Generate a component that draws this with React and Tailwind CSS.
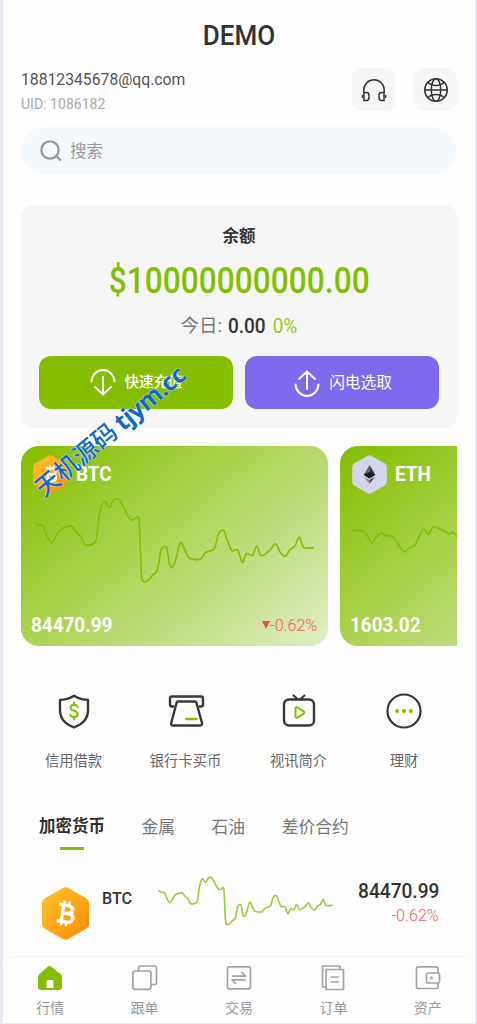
import React from "react";
import clsx from "clsx";

const BTC_POINTS = [
  [103, 275], [112, 282], [130, 287], [144, 322], [158, 337], [173, 308], [190, 293], [215, 287], [228, 303],
  [243, 318], [256, 343], [275, 343], [289, 330], [298, 262], [307, 223], [316, 213], [330, 232], [342, 208],
  [359, 208], [375, 238], [388, 263], [400, 269], [417, 263], [422, 355], [427, 446], [444, 451], [460, 433],
  [473, 420], [485, 357], [501, 351], [508, 395], [515, 412], [527, 392], [542, 337], [555, 358], [569, 383],
  [602, 387], [617, 367], [644, 355], [656, 312], [672, 300], [685, 335], [697, 361], [714, 359], [728, 397],
  [740, 370], [758, 375], [771, 347], [784, 376], [810, 360], [828, 340], [841, 365], [857, 378], [871, 358],
  [886, 347], [899, 320], [912, 352], [942, 352],
];

const ETH_POINTS = [
  [350, 301], [378, 301], [390, 312], [407, 337], [420, 320], [435, 308], [447, 316], [465, 318], [480, 332],
  [493, 353], [505, 365], [520, 352], [535, 345], [550, 315], [563, 296], [577, 312], [590, 290], [605, 294],
  [625, 302], [637, 311], [652, 307], [664, 322],
];

const smooth = (pts) =>
  pts.slice(1).reduce((d, [x, y], i) => {
    const [x0, y0] = pts[Math.max(i - 1, 0)];
    const [x1, y1] = pts[i];
    const [x3, y3] = pts[Math.min(i + 2, pts.length - 1)];
    return `${d} C ${x1 + (x - x0) / 7} ${y1 + (y - y0) / 7} ${x - (x3 - x1) / 7} ${y - (y3 - y1) / 7} ${x} ${y}`;
  }, `M ${pts[0][0]} ${pts[0][1]}`);

function Sparkline({ points, viewBox, className }) {
  return (
    <svg viewBox={viewBox} preserveAspectRatio="none" fill="none" className={className}>
      <path d={smooth(points)} stroke="currentColor" strokeWidth="1.6" strokeLinejoin="round" strokeLinecap="round" vectorEffect="non-scaling-stroke" />
    </svg>
  );
}

function BtcIcon({ className }) {
  return (
    <svg viewBox="0 0 47 53" className={className}>
      <defs>
        <linearGradient id="btc" x1="0" y1="0" x2="1" y2="1">
          <stop offset="0" stopColor="#ffc22e" />
          <stop offset=".55" stopColor="#ffa417" />
          <stop offset="1" stopColor="#ff8a00" />
        </linearGradient>
      </defs>
      <path d="M20.5 1.2q3-1.7 6 0L44 11.2q3 1.7 3 5v20.5q0 3.3-3 5l-17.5 10q-3 1.7-6 0L3 41.7q-3-1.7-3-5V16.2q0-3.3 3-5z" fill="url(#btc)" />
      <g transform="rotate(9 23.5 26.5)" fill="none" stroke="#fff" strokeWidth="3.4">
        <path d="M16 18.2h9q5 .3 5 4t-5 4h-4.5H26q5.5.4 5.5 4.4T26 35H16M20.5 18v17" />
        <path d="M20.8 14v4M25.8 14v4M20.8 35v4M25.8 35v4" strokeWidth="2.4" />
      </g>
    </svg>
  );
}

function EthIcon({ className }) {
  return (
    <svg viewBox="0 0 47 53" className={className}>
      <path d="M20.5 1.2q3-1.7 6 0L44 11.2q3 1.7 3 5v20.5q0 3.3-3 5l-17.5 10q-3 1.7-6 0L3 41.7q-3-1.7-3-5V16.2q0-3.3 3-5z" fill="#d3d5ea" />
      <path d="M23.5 13.5 15.5 27l8 5z" fill="#666" />
      <path d="m23.5 13.5 8 13.5-8 5z" fill="#333" />
      <path d="m15.5 27 8-4 8 4-8 5z" fill="#1c1c1c" />
      <path d="m16 29.5 7.5 9.500v-5z" fill="#888" />
      <path d="m31 29.5-7.500 9.500v-5z" fill="#444" />
    </svg>
  );
}

const services = [
  {
    label: "信用借款",
    width: "w-[105px]",
    icon: (
      <>
        <path d="M22 5.700c4.500 2.800 9.500 4.200 14 4.200V20c0 9-6 14.500-14 17.300C14 34.500 8 29 8 20v-10.100c4.500 0 9.500-1.400 14-4.200z" />
        <path d="M25.500 17c-.6-1.500-2-2.300-3.500-2.300-2 0-3.400 1.100-3.400 2.900 0 4.300 7.100 2 7.100 6.300 0 2-1.500 3.200-3.600 3.200-2 0-3.300-.9-3.900-2.500M22 12.300v2.400M22 27.100v2.400" stroke="#85bd00" strokeWidth="2" />
      </>
    ),
  },
  {
    label: "银行卡买币",
    width: "w-[119px]",
    icon: (
      <>
        <path d="M9.500 16.500H8q-2 0-2-2v-6q0-2 2-2h29q2 0 2 2v6q0 2-2 2h-1.500" />
        <path d="M14 11.500h17q1 0 1.300 1L38 33q.5 2.500-1.800 2.500H9q-2.400 0-1.800-2.500l5.500-20.500q.4-1 1.300-1z" />
        <path d="M22.500 29h10" stroke="#85bd00" />
      </>
    ),
  },
  {
    label: "视讯简介",
    width: "w-[107px]",
    icon: (
      <>
        <rect x="7" y="9.500" width="30" height="26" rx="5" />
        <path d="m16.500 5.500 4 3.500M27.500 5.500l-4 3.500" strokeWidth="2" />
        <path d="M18.500 18.500v8q.2 1.800 2 1.200l6-3.800q1.500-1.300 0-2.600l-6-3.800q-1.800-.8-2 1z" stroke="#85bd00" strokeWidth="2" />
      </>
    ),
  },
  {
    label: "理财",
    width: "w-[104px]",
    icon: (
      <>
        <circle cx="22" cy="21" r="16.500" strokeWidth="2.200" />
        <g fill="#85bd00" stroke="none">
          <circle cx="15.200" cy="21" r="2" />
          <circle cx="22" cy="21" r="2" />
          <circle cx="28.800" cy="21" r="2" />
        </g>
      </>
    ),
  },
];

const navItems = [
  {
    label: "行情",
    icon: (
      <path fillRule="evenodd" d="M11.400 1.300q1.100-.9 2.200 0l10.400 8.200q1 .8 1 2V22q0 3-3 3H4q-3 0-3-3V11.500q0-1.200 1-2zM9.500 23h7v-6.500q0-1.500-1.500-1.500h-4q-1.500 0-1.500 1.500z" fill="#85bd00" stroke="none" />
    ),
  },
  {
    label: "跟单",
    icon: (
      <>
        <rect x=".9" y="6" width="18" height="18.300" rx="2" />
        <path d="M6.500 6V3q0-2 2-2H22.500q2 0 2 2v14.500q0 2-2 2h-3.500" />
      </>
    ),
  },
  {
    label: "交易",
    icon: (
      <>
        <rect x="1.500" y="1.800" width="23" height="22" rx="2" />
        <path d="M6 11.200h13.500L15.500 7M19.500 14.800H6l4 4.200" />
      </>
    ),
  },
  {
    label: "订单",
    icon: (
      <>
        <path d="M5.500 22H2.500V1h17.500v3.500" />
        <rect x="6" y="4.500" width="17.500" height="20" />
        <path d="M10.500 12h8.500M10.500 17h8.500" />
      </>
    ),
  },
  {
    label: "资产",
    icon: (
      <>
        <path d="M23 8V3.800q0-2-2-2H3.500q-2 0-2 2V21.500q0 2 2 2H21q2 0 2-2V18" />
        <rect x="11.500" y="8" width="13" height="10" rx="1.500" />
        <circle cx="16.500" cy="13" r=".6" />
      </>
    ),
  },
];

const tabs = ["加密货币", "金属", "石油", "差价合约"];

function Header() {
  return (
    <header className="flex h-[127px] flex-col">
      <h1 className="flex h-[68px] items-center justify-center pt-[3px] text-[28px] font-medium">
        <span className="scale-x-[0.93]">DEMO</span>
      </h1>
      <div className="flex justify-between">
        <div className="whitespace-nowrap">
          <p className="-mt-px origin-left scale-x-[0.925] text-[17px] leading-6 text-[#555]">18812345678@qq.com</p>
          <p className="mt-[4px] origin-left scale-x-[0.97] text-[14.5px] leading-5 text-[#aaa]">UID: 1086182</p>
        </div>
        <div className="flex gap-[19px]">
          <button className="flex size-[43px] items-center justify-center rounded-[10px] bg-[#f6f6f6]">
            <svg viewBox="0 0 26 26" fill="none" stroke="#333" strokeWidth="1.500" className="size-[26px]">
              <path d="M2.800 16V13a10.200 10.200 0 0 1 20.400 0v3" />
              <path d="M3 15.500h2.300q2.700 0 2.700 2.500v2.500Q8 23.500 5.300 23.500H3zM23 15.500h-2.300q-2.700 0-2.700 2.500v2.500q0 3 2.700 3H23z" />
              <path d="M1.500 18v3M24.500 18v3" />
            </svg>
          </button>
          <button className="flex size-[43px] items-center justify-center rounded-[10px] bg-[#f6f6f6]">
            <svg viewBox="0 0 26 26" fill="none" stroke="#333" strokeWidth="1.500" className="size-[26px]">
              <circle cx="13" cy="13" r="11.300" />
              <ellipse cx="13" cy="13" rx="4.700" ry="11.300" />
              <path d="M1.700 13h22.600M4.800 5.300Q8 8.500 13 8.500t8.200-3.200M4.800 20.700Q8 17.500 13 17.500t8.200 3.200" />
            </svg>
          </button>
        </div>
      </div>
    </header>
  );
}

function BalanceCard() {
  return (
    <section className="mt-[31px] flex h-[223px] flex-col items-center rounded-xl bg-[#f6f6f6] px-[18px]">
      <p className="mt-5 text-[16.5px] leading-6 font-bold">余额</p>
      <p className="mt-[9px] scale-x-[0.88] text-[36px] leading-[46px] font-medium whitespace-nowrap text-[#85bd00]">$10000000000.00</p>
      <div className="mt-[10px] flex items-center justify-center text-xl leading-6 whitespace-nowrap">
        <span className="text-[18.5px] text-[#777]">今日:</span>
        <span className="ml-[5px] scale-x-[0.95] font-medium">0.00</span>
        <span className="ml-[5px] scale-x-[0.95] text-[#85bd00]/85">0%</span>
      </div>
      <div className="mt-[18px] flex w-full gap-3 text-white">
        <button className="flex h-[53px] w-[194px] items-center justify-center gap-[9px] rounded-xl bg-[#85bd00] text-[14.5px] font-medium">
          <svg viewBox="0 0 26 28" fill="none" stroke="currentColor" strokeWidth="2" className="h-7 w-[26px]" strokeLinecap="round">
            <path d="M1.600 12.500a11.400 11.400 0 0 1 22.800 0M13 8v17.500M5 18l8 7.500 8-7.500" />
          </svg>
          快速充值
        </button>
        <button className="flex h-[53px] w-[194px] items-center justify-center gap-[9px] rounded-xl bg-[#7d69ec] pl-[2px] text-[15.7px]">
          <svg viewBox="0 0 26 28" fill="none" stroke="currentColor" strokeWidth="2" className="h-7 w-[26px]" strokeLinecap="round">
            <path d="M1.600 15.500a11.400 11.400 0 0 0 22.800 0M13 20V2.500M5 10l8-7.500 8 7.500" />
          </svg>
          闪电选取
        </button>
      </div>
    </section>
  );
}

function CoinCard({ name, price, change, icon, chart }) {
  return (
    <div className="flex h-[200px] w-[307px] shrink-0 flex-col rounded-[18px] bg-[linear-gradient(139deg,#85bd00_0%,#a4cf40_35%,#bfdc7d_65%,#e0eec3_100%)] px-[10px]">
      <div className="mt-[9px] flex items-center gap-[8px] pl-[2px]">
        {icon}
        <span className="origin-left scale-x-[0.9] pt-px text-[21px] font-bold text-white">{name}</span>
      </div>
      <div className="-mt-[2px] h-[94px] pl-[3px] text-[#85bd00]">{chart}</div>
      <div className="mt-[24px] flex h-8 items-center justify-between">
        <span className="origin-left scale-x-[0.9] text-[21px] font-bold text-white">{price}</span>
        {change && (
          <span className="flex items-center text-[#ef5b63]">
            <i className="mb-[2px] size-0 border-x-4 border-t-8 border-x-transparent border-t-[#f5455c]" />
            <span className="-mr-[2px] origin-left scale-x-[0.95] text-[17px] font-light">{change}</span>
          </span>
        )}
      </div>
    </div>
  );
}

export default function App() {
  return (
    <div className="relative flex h-[1024px] w-[477px] flex-col overflow-hidden border-r-2 border-b border-l-[3px] border-[#e8e9f1] bg-[#fdfdfd] font-[Roboto,'Noto_Sans_CJK_SC',sans-serif] text-[#333]">
      <main className="flex flex-col pr-[18px] pl-[18px]">
        <Header />
        <div className="flex h-[47px] items-center gap-[8px] rounded-full bg-[#f3f9fc] pl-[19px] text-[#999]">
          <svg viewBox="0 0 22 22" fill="none" stroke="#999" strokeWidth="2.200" className="size-[22px]">
            <circle cx="10" cy="10" r="8.700" />
            <path d="m16 16 5 4.500" />
          </svg>
          <span className="pt-[3px] text-[16.5px]">搜索</span>
        </div>
        <BalanceCard />

        <section className="mt-[18px] flex gap-3 overflow-hidden">
          <CoinCard
            name="BTC"
            price="84470.99"
            change="-0.62%"
            icon={<BtcIcon className="h-[39px] w-[35px]" />}
            chart={<Sparkline points={BTC_POINTS} viewBox="103 185 840 282" className="h-[94px] w-[280px]" />}
          />
          <CoinCard
            name="ETH"
            price="1603.02"
            icon={<EthIcon className="h-[39px] w-[35px]" />}
            chart={<Sparkline points={ETH_POINTS} viewBox="350 185 840 282" className="h-[94px] w-[280px]" />}
          />
        </section>

        <section className="mt-[44px] flex">
          {services.map((item) => (
            <div key={item.label} className={clsx("flex flex-col items-center", item.width)}>
              <svg viewBox="0 0 44 44" fill="none" stroke="#383838" strokeWidth="2.400" strokeLinecap="round" strokeLinejoin="round" className="size-11">
                {item.icon}
              </svg>
              <span className="mt-[15px] text-[14.3px] leading-6 text-[#666]">{item.label}</span>
            </div>
          ))}
        </section>

        <nav className="mt-[42px] flex h-[36px] gap-[36.5px] pl-[18px] text-[16.8px] leading-6 text-[#777]">
          {tabs.map((tab, i) => (
            <div key={tab} className={clsx("flex flex-col items-center", i === 0 && "text-[16.5px] font-bold text-[#333]")}>
              {tab}
              {i === 0 && <span className="mt-[8px] h-[2.5px] w-6 bg-[#85bd00]" />}
            </div>
          ))}
        </nav>

        <div className="mt-[27px] flex h-[76px] items-start pr-[18px] pl-[21px]">
          <BtcIcon className="mt-[9px] h-[53px] w-[47px]" />
          <span className="mt-[8px] ml-[13px] w-[57px] origin-left scale-x-[0.95] text-[17px] leading-6 font-medium">BTC</span>
          <Sparkline points={BTC_POINTS} viewBox="103 208 839 243" className="h-[46px] w-[173px] overflow-visible text-[#9ccb3b]" />
          <div className="flex flex-1 flex-col items-end whitespace-nowrap">
            <span className="mt-[1px] origin-right scale-x-[0.91] text-[21px] leading-6 font-medium">84470.99</span>
            <span className="origin-right scale-x-[0.95] text-[17px] leading-6 font-light text-[#ef5b63]">-0.62%</span>
          </div>
        </div>
      </main>

      <footer className="mt-auto grid h-[67px] shrink-0 grid-cols-5 rounded-t-[12px] border-t border-[#eff5f6] bg-[#fdfdfd]">
        {navItems.map((item) => (
          <div key={item.label} className="flex flex-col items-center pt-[8px]">
            <svg viewBox="0 0 26 26" fill="none" stroke="#a3a3a3" strokeWidth="1.700" strokeLinejoin="round" className="size-[26px]">
              {item.icon}
            </svg>
            <span className="mt-[5px] text-sm leading-6 text-[#999]">{item.label}</span>
          </div>
        ))}
      </footer>

      <div className="pointer-events-none absolute top-[413px] left-[6px] flex h-9 w-[202px] -rotate-[40deg] items-center justify-center gap-[5px] font-['Open_Sans','Noto_Sans_CJK_SC',sans-serif] text-[24.5px] font-medium whitespace-nowrap text-[#1169c4] [text-shadow:0_0_1px_#fff,0_0_1px_#fff]">
        天机源码 <span className="font-bold tracking-[-0.6px]">tjym.cc</span>
      </div>
    </div>
  );
}
